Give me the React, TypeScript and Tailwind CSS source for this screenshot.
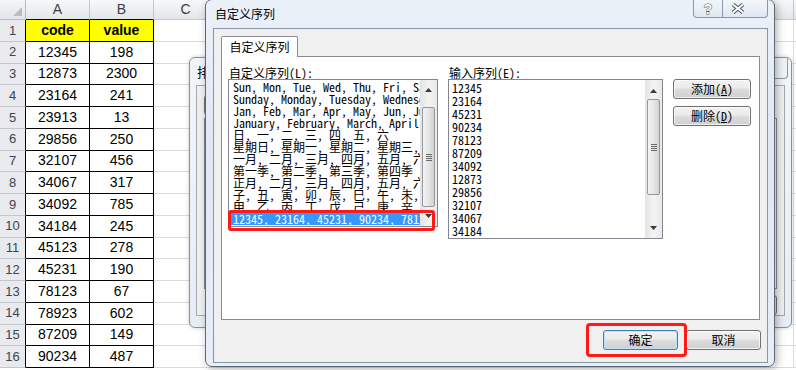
import React from 'react';

const cols = ['A', 'B', 'C', 'D', 'E', 'F', 'G', 'H', 'I', 'J', 'K', 'L', 'M'];

const rows: string[][] = [
  ['code', 'value'],
  ['12345', '198'],
  ['12873', '2300'],
  ['23164', '241'],
  ['23913', '13'],
  ['29856', '250'],
  ['32107', '456'],
  ['34067', '317'],
  ['34092', '785'],
  ['34184', '245'],
  ['45123', '278'],
  ['45231', '190'],
  ['78123', '67'],
  ['78923', '602'],
  ['87209', '149'],
  ['90234', '487'],
];

const builtInLists = [
  'Sun, Mon, Tue, Wed, Thu, Fri, Sat',
  'Sunday, Monday, Tuesday, Wednesday, Thursday, Friday, Saturday',
  'Jan, Feb, Mar, Apr, May, Jun, Jul, Aug, Sep, Oct, Nov, Dec',
  'January, February, March, April, May, June, July',
  '日, 一, 二, 三, 四, 五, 六',
  '星期日, 星期一, 星期二, 星期三, 星期四, 星期五, 星期六',
  '一月, 二月, 三月, 四月, 五月, 六月, 七月, 八月',
  '第一季, 第二季, 第三季, 第四季',
  '正月, 二月, 三月, 四月, 五月, 六月, 七月, 八月',
  '子, 丑, 寅, 卯, 辰, 巳, 午, 未, 申, 酉, 戌, 亥',
];

const entries = ['12345', '23164', '45231', '90234', '78123', '87209', '34092', '12873', '29856', '32107', '34067', '34184'];

function Sheet() {
  return (
    <div className="grid grid-cols-[26px_repeat(13,64px)] grid-rows-[20px_repeat(16,21.75px)]">
      <div className="relative border-b border-r border-[#b7bcc3] bg-gradient-to-b from-[#f5f6f8] to-[#e2e5e9]">
        <svg className="absolute bottom-[3px] right-[3px]" width="9" height="9">
          <path d="M9 0V9H0Z" fill="#b9bdc3" />
        </svg>
      </div>
      {cols.map((c, i) => (
        <div
          key={c}
          className={`flex items-center justify-center border-b border-r bg-gradient-to-b from-[#f7f8f9] to-[#e3e6ea] text-[14px] text-[#3b3f45] ${
            i < 2 ? 'border-r-[#c3c7cd] border-b-black' : 'border-[#c3c7cd]'
          }`}
        >
          {c}
        </div>
      ))}
      {rows.map((r, ri) => (
        <React.Fragment key={ri}>
          <div className="flex items-center justify-center border-b border-r border-b-[#c3c7cd] border-r-black bg-[#e8eaed] text-[13px] text-[#3e4450]">
            {ri + 1}
          </div>
          {r.map((v, ci) => (
            <div
              key={ci}
              className={`flex items-center justify-center border-b border-r border-black text-[14px] text-black ${
                ri === 0 ? 'bg-[#ffff00] font-bold' : ''
              }`}
            >
              {v}
            </div>
          ))}
          {cols.slice(2).map((c) => (
            <div key={c} className="border-b border-r border-[#dadcdd]" />
          ))}
        </React.Fragment>
      ))}
    </div>
  );
}

function WinButton({ children, focused, className }: { children: React.ReactNode; focused?: boolean; className: string }) {
  return (
    <div
      className={`flex h-[20px] items-center justify-center rounded-[3px] border bg-[linear-gradient(#f2f2f2_0%,#ebebeb_45%,#dddddd_50%,#cfcfcf_100%)] text-[12px] leading-none text-black ${
        focused ? 'border-[#3c7fb1] shadow-[inset_0_0_0_1px_#bfe3f8]' : 'border-[#707070] shadow-[inset_0_0_0_1px_rgba(255,255,255,0.75)]'
      } ${className}`}
    >
      {children}
    </div>
  );
}

function ScrollBar({ thumb, upTop, downBottom }: { thumb: string; upTop: string; downBottom: string }) {
  return (
    <div className="relative h-full w-[17px] shrink-0 bg-gradient-to-r from-[#e3e3e3] via-[#f3f3f3] to-[#e9e9e9]">
      <svg className={`absolute left-[5px] ${upTop}`} width="7" height="4">
        <path d="M0 4L3.5 0L7 4Z" fill="#3a3a3a" />
      </svg>
      <div
        className={`absolute left-[2px] flex w-[13px] flex-col items-center justify-center gap-[1px] rounded-[2px] border border-[#979797] bg-gradient-to-r from-[#f4f4f4] via-[#e6e6e6] to-[#d2d2d2] ${thumb}`}
      >
        <div className="h-px w-[6px] bg-[#6a6a6a]" />
        <div className="h-px w-[6px] bg-[#6a6a6a]" />
        <div className="h-px w-[6px] bg-[#6a6a6a]" />
        <div className="h-px w-[6px] bg-[#6a6a6a]" />
      </div>
      <svg className={`absolute left-[5px] ${downBottom}`} width="7" height="4">
        <path d="M0 0L3.5 4L7 0Z" fill="#3a3a3a" />
      </svg>
    </div>
  );
}

function SortDialog() {
  return (
    <div className="absolute left-[189px] top-[57px] flex h-[271px] w-[603px] flex-col rounded-[6px] border border-[#8a9099] bg-gradient-to-b from-[#f2f6fa] to-[#e6edf5] shadow-[0_0_4px_rgba(0,0,0,0.2)] font-['Noto_Sans_CJK_SC',sans-serif]">
      <div className="relative flex h-[27px] shrink-0 items-center pl-[7px] text-[13px] text-black">
        排序
        <div className="absolute right-[3px] top-0 h-[21px] w-[43px] rounded-b-[4px] border border-t-0 border-[#8b97a6] bg-[#eef3f8]" />
      </div>
      <div className="mx-[6px] mb-[15px] flex flex-1 flex-col border border-[#a3a9b0] bg-[#f0f0f0]">
        <div className="ml-[7px] mt-[9px] h-[20px] w-[80px] rounded-[3px] border border-[#707070] bg-[#e6e6e6]" />
        <div className="mx-[7px] mt-[3px] h-[171px] border border-[#828790] bg-white" />
        <div className="mr-[7px] mt-[6px] h-[20px] w-[75px] self-end rounded-[3px] border border-[#707070] bg-[#e3e3e3]" />
      </div>
    </div>
  );
}

function CustomListDialog() {
  return (
    <div className="absolute left-[205px] top-[-1px] flex h-[368px] w-[570px] flex-col rounded-[7px] border border-[#5d6977] bg-[linear-gradient(180deg,#eaf1f9,#dfe8f3_40%,#e7eef7)] shadow-[2px_2px_8px_rgba(0,0,0,0.3)] font-['Noto_Sans_Mono_CJK_SC','Noto_Sans_CJK_SC',monospace]">
      <div className="relative flex h-[28px] shrink-0 items-center pl-[9px] text-[12px] text-black">
        自定义序列
        <div className="absolute right-[6px] top-[-1px] flex h-[19px] w-[75px] overflow-hidden rounded-b-[4px] border border-t-0 border-[#8b97a6] bg-gradient-to-b from-[#f3f7fb] to-[#dfe8f2]">
          <div className="flex w-[29px] items-center justify-center border-r border-[#8b97a6] pt-[2px] font-['Liberation_Sans',sans-serif] text-[14px] font-bold leading-none text-white [-webkit-text-stroke:1px_#50565e] [paint-order:stroke_fill]">
            ?
          </div>
          <div className="flex flex-1 items-center pl-[8px] pt-[1px]">
            <svg width="14" height="11" viewBox="0 0 14 11">
              <path d="M2 1.5L12 9.5M12 1.5L2 9.5" stroke="#50565e" strokeWidth="4" />
              <path d="M2 1.5L12 9.5M12 1.5L2 9.5" stroke="#ffffff" strokeWidth="2" />
            </svg>
          </div>
        </div>
      </div>
      <div className="mb-[3px] ml-[7px] mr-[6px] flex flex-1 flex-col border border-[#8995a3] bg-[#f0f0f0]">
        <div className="relative z-10 ml-[7px] mt-[7px] flex h-[21px] w-[77px] items-center justify-center rounded-t-[2px] border border-b-0 border-[#898c95] bg-white text-[12px] text-black">
          自定义序列
        </div>
        <div className="-mt-px mx-[7px] flex h-[264px] gap-[10px] border border-[#898c95] bg-white pl-[6px] pt-[9px] text-[12px] text-black">
          <div className="flex flex-col">
            <div className="h-[13px] pl-[1px] leading-[13px]">
              自定义序列(<span className="underline">L</span>):
            </div>
            <div className="flex h-[148px] w-[210px] border border-[#828790]">
              <div className="flex-1 overflow-hidden whitespace-nowrap pl-[2px] pt-px text-[12px] leading-[12px]">
                {builtInLists.map((l) => (
                  <div key={l} className="h-[12px] pl-[2px]">
                    {l}
                  </div>
                ))}
                <div className="h-[10px] overflow-hidden pl-[2px]">甲, 乙, 丙, 丁, 戊, 己, 庚, 辛, 壬, 癸</div>
                <div className="mt-px h-[13px] overflow-hidden bg-[#3399ff] pl-[2px] leading-[13px] text-white">
                  12345, 23164, 45231, 90234, 78123, 87209, 34092
                </div>
              </div>
              <ScrollBar thumb="top-[27px] h-[100px]" upTop="top-[8px]" downBottom="bottom-[8px]" />
            </div>
          </div>
          <div className="flex flex-col">
            <div className="h-[13px] pl-[1px] leading-[13px]">
              输入序列(<span className="underline">E</span>):
            </div>
            <div className="flex h-[160px] w-[215px] border border-[#828790]">
              <div className="flex-1 overflow-hidden pl-[3px] pt-px text-[12px] leading-[13px]">
                {entries.map((e) => (
                  <div key={e} className="h-[13px]">
                    {e}
                  </div>
                ))}
              </div>
              <ScrollBar thumb="top-[19px] h-[96px]" upTop="top-[9px]" downBottom="bottom-[8px]" />
            </div>
          </div>
          <div className="flex flex-col gap-[7px] pt-[13px]">
            <WinButton className="w-[78px]">
              添加(<span className="underline">A</span>)
            </WinButton>
            <WinButton className="w-[78px]">
              删除(<span className="underline">D</span>)
            </WinButton>
          </div>
        </div>
        <div className="mt-[10px] flex justify-end gap-[8px] pr-[6px]">
          <WinButton focused className="w-[75px]">
            确定
          </WinButton>
          <WinButton className="w-[75px]">取消</WinButton>
        </div>
      </div>
      <div className="absolute left-[22px] top-[210px] h-[21px] w-[207px] rounded-[3px] border-[3px] border-[#ff1a1a]" />
      <div className="absolute left-[380px] top-[323px] h-[34px] w-[101px] rounded-[4px] border-[3px] border-[#ff1a1a]" />
    </div>
  );
}

export default function App() {
  return (
    <div className="relative h-[370px] w-[796px] overflow-hidden bg-white font-['Liberation_Sans',Arial,sans-serif]">
      <Sheet />
      <SortDialog />
      <CustomListDialog />
    </div>
  );
}
